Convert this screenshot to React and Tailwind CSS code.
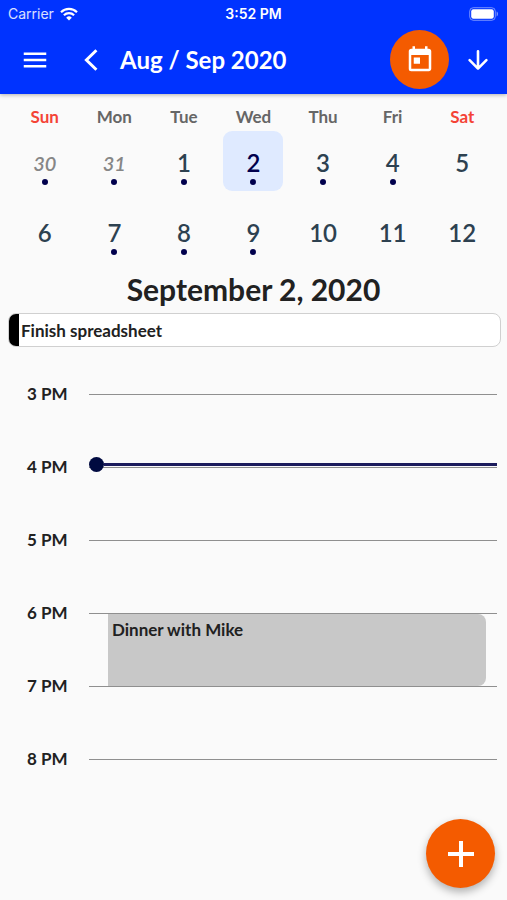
import React, { useState } from 'react';
import { MdMenu, MdToday } from 'react-icons/md';

const WEEKDAYS = ['Sun', 'Mon', 'Tue', 'Wed', 'Thu', 'Fri', 'Sat'];

const DAYS = [
  { id: 'aug-30', label: 30, outside: true, hasEvent: true },
  { id: 'aug-31', label: 31, outside: true, hasEvent: true },
  { id: 'sep-1', label: 1, hasEvent: true },
  { id: 'sep-2', label: 2, hasEvent: true },
  { id: 'sep-3', label: 3, hasEvent: true },
  { id: 'sep-4', label: 4, hasEvent: true },
  { id: 'sep-5', label: 5 },
  { id: 'sep-6', label: 6 },
  { id: 'sep-7', label: 7, hasEvent: true },
  { id: 'sep-8', label: 8, hasEvent: true },
  { id: 'sep-9', label: 9, hasEvent: true },
  { id: 'sep-10', label: 10 },
  { id: 'sep-11', label: 11 },
  { id: 'sep-12', label: 12 },
];

const HOURS = [
  { label: '3 PM' },
  { label: '4 PM', now: true },
  { label: '5 PM' },
  { label: '6 PM', event: 'Dinner with Mike' },
  { label: '7 PM' },
  { label: '8 PM' },
];

const StatusBar = () => (
  <div className="grid h-[27px] grid-cols-3 items-center px-2 font-[Inter,sans-serif] text-sm">
    <div className="flex items-center gap-1.5 text-white/85">
      <span>Carrier</span>
      <svg viewBox="0 0 18 14" className="h-3.5 w-[18px]" fill="none" stroke="white" strokeWidth="2.2">
        <path d="M1 5.2a11.5 11.5 0 0 1 16 0" />
        <path d="M3.9 8.3a7.3 7.3 0 0 1 10.2 0" />
        <path d="M9 13.6L6.2 10.7a4 4 0 0 1 5.6 0z" fill="white" stroke="none" />
      </svg>
    </div>
    <span className="text-center font-semibold whitespace-nowrap">3:52 PM</span>
    <svg viewBox="0 0 30 14" className="h-3.5 w-[30px] justify-self-end" fill="none">
      <rect x="0.7" y="0.7" width="25.6" height="12.6" rx="3.6" stroke="white" strokeOpacity="0.45" />
      <rect x="2.2" y="2.2" width="22.6" height="9.6" rx="2.2" fill="white" />
      <path d="M27.6 4.6c1.8.6 1.8 4.2 0 4.8z" fill="white" fillOpacity="0.5" />
    </svg>
  </div>
);

const Toolbar = () => (
  <div className="flex h-[67px] items-center pr-4 pb-0.5 pl-5">
    <button type="button" aria-label="Open menu" className="flex">
      <MdMenu className="size-[30px]" />
    </button>
    <button type="button" aria-label="Previous" className="ml-8 flex">
      <svg viewBox="0 0 18 24" className="h-6 w-[18px]" fill="none" stroke="currentColor" strokeWidth="3">
        <path d="M14.4 2.2L4.4 12l10 9.8" />
      </svg>
    </button>
    <h1 className="ml-5 grow text-2xl leading-8 font-bold whitespace-nowrap">Aug / Sep 2020</h1>
    <button
      type="button"
      aria-label="Go to today"
      className="flex size-[59px] shrink-0 items-center justify-center rounded-full bg-[#f45b00]"
    >
      <MdToday className="size-[30px]" />
    </button>
    <button type="button" aria-label="Expand" className="ml-4 flex">
      <svg
        viewBox="0 0 26 26"
        className="size-[26px]"
        fill="none"
        stroke="currentColor"
        strokeWidth="2.6"
        strokeLinecap="round"
        strokeLinejoin="round"
      >
        <path d="M13 4.2v17.2M4.6 13.2l8.4 8.4 8.4-8.4" />
      </svg>
    </button>
  </div>
);

const DayCell = ({ day, selected, onSelect }) => {
  let tone = 'text-2xl font-semibold text-[#2d4150]';
  if (day.outside) tone = 'text-xl font-semibold text-[#868686] italic';
  if (selected) tone = 'text-2xl font-semibold text-[#00004d]';

  return (
    <button
      type="button"
      aria-pressed={selected}
      onClick={() => onSelect(day.id)}
      className={`flex h-[60px] w-[60px] flex-col items-center justify-self-center rounded-[9px] pt-4 ${selected ? 'bg-[#dfeaff]' : ''}`}
    >
      <span className={`leading-8 ${tone}`}>{day.label}</span>
      {day.hasEvent && <span className="size-1.5 shrink-0 rounded-full bg-[#00004d]" />}
    </button>
  );
};

const HourRow = ({ hour }) => (
  <li className="relative flex h-[73px] items-center pr-2.5 pl-[27px]">
    <span className="w-[62px] pb-0.5 text-[17px] leading-6 font-bold">{hour.label}</span>
    <div className="h-px grow bg-[#8f8f8f]" />
    {hour.now && (
      <div className="absolute top-[26px] right-2.5 left-[89px] flex h-[15px] items-center">
        <span className="size-[15px] rounded-full bg-[#000a40]" />
        <span className="h-[3px] grow bg-[#1b1b5c]" />
      </div>
    )}
    {hour.event && (
      <div className="absolute top-[37px] right-[21px] left-[108px] h-[72px] rounded-r-lg bg-[#c8c8c8] px-1 pt-1 text-[17px] leading-6 font-bold">
        {hour.event}
      </div>
    )}
  </li>
);

const App = () => {
  const [selectedDay, setSelectedDay] = useState('sep-2');

  return (
    <div className="min-h-screen bg-[#fafafa] font-[Lato,sans-serif] text-[#212121]">
      <header className="bg-[#0033ff] text-white shadow-[0_1px_4px_rgba(0,0,0,0.3)]">
        <StatusBar />
        <Toolbar />
      </header>

      <main>
        <section className="px-2.5 pt-[11px]">
          <div className="grid grid-cols-7 text-center text-[17px] leading-6 font-bold">
            {WEEKDAYS.map((name, i) => (
              <span key={name} className={i === 0 || i === 6 ? 'text-[#f44336]' : 'text-[#666666]'}>
                {name}
              </span>
            ))}
          </div>
          <div className="mt-0.5 grid grid-cols-7 gap-y-2.5">
            {DAYS.map(day => (
              <DayCell key={day.id} day={day} selected={day.id === selectedDay} onSelect={setSelectedDay} />
            ))}
          </div>
        </section>

        <h2 className="mt-2 text-center text-[30px] leading-10 font-bold">September 2, 2020</h2>

        {/* All-day events */}
        <div className="mt-1 mr-1.5 ml-2 flex h-[34px] items-center overflow-hidden rounded-lg border border-[#d0d0d0] bg-white">
          <span className="h-full w-2.5 bg-black" />
          <span className="pt-0.5 pl-0.5 text-[17px] leading-6 font-bold">Finish spreadsheet</span>
        </div>

        {/* Timeline */}
        <ul className="mt-[11px]">
          {HOURS.map(hour => (
            <HourRow key={hour.label} hour={hour} />
          ))}
        </ul>
      </main>

      <button
        type="button"
        aria-label="Add event"
        className="fixed right-3 bottom-3 flex size-[69px] items-center justify-center rounded-full bg-[#f45b00] text-white shadow-[0_4px_8px_rgba(0,0,0,0.3)]"
      >
        <svg viewBox="0 0 26 26" className="size-[26px]" stroke="currentColor" strokeWidth="4">
          <path d="M13 0v26M0 13h26" />
        </svg>
      </button>
    </div>
  );
};

export default App;
